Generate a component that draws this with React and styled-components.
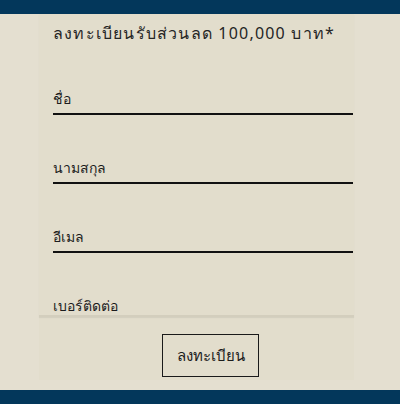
import styled, { createGlobalStyle } from 'styled-components'

const Global = createGlobalStyle`
    body {
        margin: 0;
        background: #e4dfd0;
        font-family: "Noto Sans", "Liberation Sans", sans-serif;
        color: #1a1a1a;
    }
`

const Page = styled.div`
    height: 404px;
    display: flex;
    flex-direction: column;
`

const Band = styled.div`
    height: 14px;
    flex: 0 0 14px;
    background: #03375b;
`

const Main = styled.div`
    flex: 1;
    display: flex;
    align-items: flex-start;
`

const Panel = styled.div`
    margin-left: 39px;
    width: 315px;
    height: 366px;
    background: #e2ddcc;
    display: flex;
    flex-direction: column;
`

const Scroller = styled.div`
    height: 301px;
    overflow: hidden;
    padding: 0 1px 0 14px;
    border-bottom: 2px solid #d3cebd;
    box-shadow: 0 1px 1px rgba(0, 0, 0, 0.06);
`

const Title = styled.div`
    margin: 9px 0 0 0;
    font-size: 16px;
    line-height: 20px;
    letter-spacing: 1.2px;
    color: #252525;
`

const Field = styled.div`
    margin-top: ${p => p.first ? '41px' : '38px'};
    height: 29px;
    border-bottom: 2px solid #111;
    display: flex;
    align-items: center;
    font-size: 14px;
    color: #1c1c1c;
`

const Actions = styled.div`
    display: flex;
    justify-content: center;
    padding-top: 17px;
    padding-left: 28px;
`

const Button = styled.button`
    width: 97px;
    height: 43px;
    background: transparent;
    border: 1.5px solid #1a1a1a;
    font-family: inherit;
    font-size: 15px;
    color: #1c1c1c;
    padding: 0;
`

const fields = ['ชื่อ', 'นามสกุล', 'อีเมล', 'เบอร์ติดต่อ']

export default function App() {
    return <Page>
        <Global />
        <Band />
        <Main>
            <Panel>
                <Scroller>
                    <Title>ลงทะเบียนรับส่วนลด 100,000 บาท*</Title>
                    {fields.map((f, i) => <Field key={f} first={i === 0}>{f}</Field>)}
                </Scroller>
                <Actions>
                    <Button>ลงทะเบียน</Button>
                </Actions>
            </Panel>
        </Main>
        <Band />
    </Page>
}
